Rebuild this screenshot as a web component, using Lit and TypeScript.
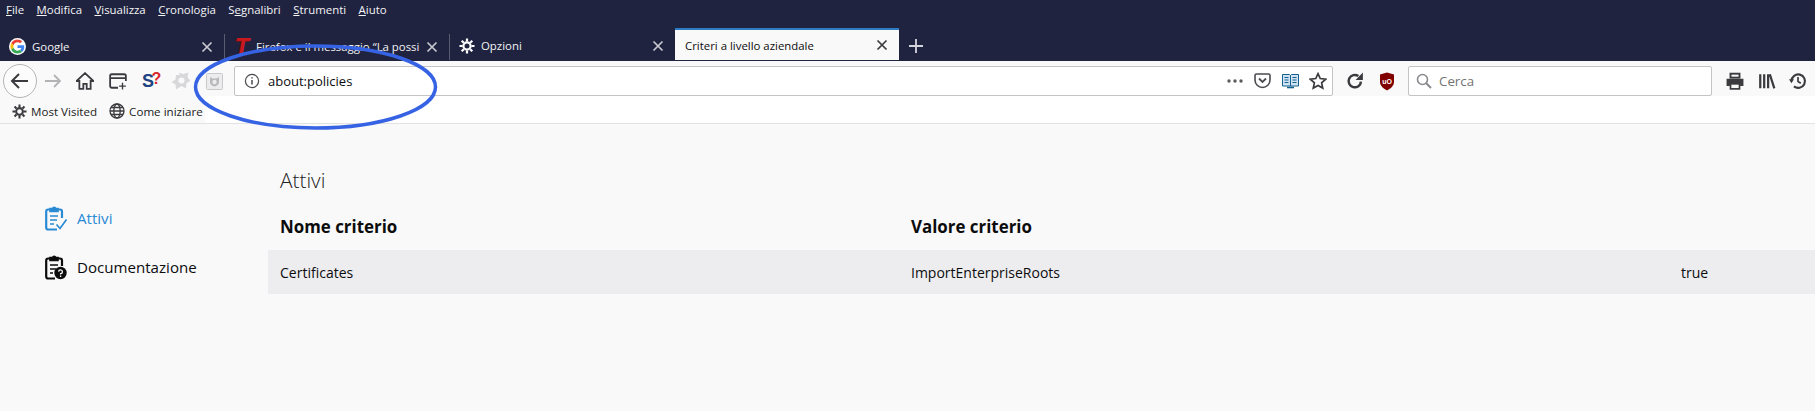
import { LitElement, html, css, svg } from "lit";
import { customElement } from "lit/decorators.js";

const gear = (c: string, s = 16) => html`<svg width=${s} height=${s} viewBox="0 0 16 16" fill="none" stroke=${c}>
  <circle cx="8" cy="8" r="3.6" stroke-width="2.2"/>
  <g stroke-width="2.2" stroke-linecap="butt">
    <path d="M8 0.5V3.5M8 12.5V15.5M0.5 8H3.5M12.5 8H15.5M2.7 2.7L4.8 4.8M11.2 11.2L13.3 13.3M13.3 2.7L11.2 4.8M4.8 11.2L2.7 13.3"/>
  </g></svg>`;
const close = (c: string) => html`<svg class="x" width="12" height="12" viewBox="0 0 12 12" stroke=${c} stroke-width="1.7" fill="none"><path d="M1.5 1.5L10.5 10.5M10.5 1.5L1.5 10.5"/></svg>`;
const google = html`<svg width="17" height="17" viewBox="-5 -5 58 58"><circle cx="24" cy="24" r="29" fill="#fff"/>
  <path fill="#EA4335" d="M24 9.5c3.54 0 6.71 1.22 9.21 3.6l6.85-6.85C35.9 2.38 30.47 0 24 0 14.62 0 6.51 5.38 2.56 13.22l7.98 6.19C12.43 13.72 17.74 9.5 24 9.5z"/>
  <path fill="#4285F4" d="M46.98 24.55c0-1.57-.15-3.09-.38-4.55H24v9.02h12.94c-.58 2.96-2.26 5.48-4.78 7.18l7.73 6c4.51-4.18 7.09-10.36 7.09-17.65z"/>
  <path fill="#FBBC05" d="M10.53 28.59c-.48-1.45-.76-2.99-.76-4.59s.27-3.14.76-4.59l-7.98-6.19C.92 16.46 0 20.12 0 24c0 3.88.92 7.54 2.56 10.78l7.97-6.19z"/>
  <path fill="#34A853" d="M24 48c6.48 0 11.93-2.13 15.89-5.81l-7.73-6c-2.15 1.45-4.92 2.3-8.16 2.3-6.26 0-11.57-4.22-13.47-9.91l-7.98 6.19C6.51 42.62 14.62 48 24 48z"/></svg>`;

const ic = (w: number, body: unknown) => html`<span class="slot" style="width:${w}px">${body}</span>`;
const s16 = (body: unknown, fill = "none", stroke = "#3b3b3f", w = 1.6) => html`<svg width="18" height="18" viewBox="0 0 16 16" fill=${fill} stroke=${stroke} stroke-width=${w}>${body}</svg>`;

const checklist = (c: string) => html`<svg width="22" height="26" viewBox="0 0 22 26" fill="none" stroke=${c} stroke-width="2.2">
  <path d="M5 4.5H3.2A2 2 0 0 0 1.2 6.5V22.5A2 2 0 0 0 3.2 24.5H12M13 4.5H15A2 2 0 0 1 17 6.5V13"/>
  <path d="M5 6.5V3.5H7.5A1.8 1.8 0 0 1 10.8 3.5H13V6.5Z" stroke-width="1.6" fill=${c}/>
  <path d="M5 11H13M5 15H12M5 19H9" stroke-width="1.7"/>
  <path d="M11.5 19.5L15 23.5L21.5 14.5" stroke-width="1.7"/></svg>`;

const docIcon = html`<svg width="22" height="26" viewBox="0 0 22 26" fill="none" stroke="#0c0c0d" stroke-width="2.2">
  <path d="M5 4.5H3.2A2 2 0 0 0 1.2 6.5V22.5A2 2 0 0 0 3.2 24.5H10M13 4.5H15A2 2 0 0 1 17 6.5V12"/>
  <path d="M5 6.5V3.5H7.5A1.8 1.8 0 0 1 10.8 3.5H13V6.5Z" stroke-width="1.6" fill="#0c0c0d"/>
  <path d="M5 11H13M5 15H11M5 19H8" stroke-width="1.7"/>
  <circle cx="15.5" cy="19" r="6.2" fill="#0c0c0d" stroke="none"/>
  <path d="M13.6 17.6A1.9 1.9 0 1 1 15.6 19.6V20.6M15.6 21.6V23" stroke="#fff" stroke-width="1.3"/></svg>`;

@customElement("app-root")
export class AppRoot extends LitElement {
  static styles = css`
    :host { display: block; position: relative; width: 1815px; height: 411px; overflow: hidden; background: #f9f9fa; font-family: "Open Sans", "Noto Sans", sans-serif; color: #0c0c0d; }
    .menubar { height: 30px; box-sizing: border-box; background: #202340; color: #f4f4f6; display: flex; align-items: center; gap: 12.5px; padding: 0 0 11px 6px; font-size: 11.4px; }
    .tabs { height: 31px; background: #202340; display: flex; color: #f2f2f4; font-size: 11.4px; }
    .tab { width: 225px; box-sizing: border-box; display: flex; align-items: center; padding: 0 11px 0 9px; gap: 6px; position: relative; }
    .tab .lbl { flex: 1; white-space: nowrap; overflow: hidden; }
    .tab.sep { border-right: 1px solid #5a5c72; margin: 2px 0 0; height: 26px; align-self: center; }
    .tab.active { width: 224px; height: 32px; margin-top: -2px; background: #f9f9fa; color: #0c0c0d; border-top: 2px solid #2d7cc1; padding-left: 10px; }
    .plus { margin-left: 9px; display: flex; align-items: center; }
    .toolbar { height: 35px; box-sizing: border-box; display: flex; align-items: center; padding-top: 5px; }
    .slot { display: flex; flex: none; align-items: center; justify-content: center; height: 30px; }
    .back { width: 34px; height: 34px; box-sizing: border-box; margin-left: 3px; border: 1px solid #b5b5b8; border-radius: 50%; background: #fcfcfc; display: flex; align-items: center; justify-content: center; flex: none; }
    .urlbar { width: 1099px; height: 30px; box-sizing: border-box; background: #fff; border: 1px solid #c4c4c6; border-radius: 2px; display: flex; align-items: center; font-size: 13px; flex: none; }
    .urlbar .txt { flex: 1; }
    .search { width: 304px; height: 30px; box-sizing: border-box; margin-left: 11px; background: #fff; border: 1px solid #c4c4c6; border-radius: 2px; display: flex; align-items: center; padding-left: 7px; gap: 7px; font-size: 13.3px; color: #737373; flex: none; }
    .bookmarks { height: 28px; box-sizing: border-box; background: linear-gradient(to right, #f9f9fa 205px, #fff 205px); border-bottom: 1px solid #e2e2e3; display: flex; align-items: center; padding: 3px 0 0 12px; gap: 12px; font-size: 11.6px; color: #222; }
    .bm { display: flex; align-items: center; gap: 4px; }
    .page { display: flex; }
    .side { width: 268px; flex: none; padding: 81px 0 0 45px; box-sizing: border-box; font-size: 15.1px; }
    .side .item { display: flex; align-items: center; gap: 10px; height: 26px; margin-bottom: 23px; }
    .side .item.on { color: #2a8ad4; }
    .main { flex: 1; padding-top: 42px; }
    h2 { margin: 0 0 1px 12px; font-weight: 300; font-size: 20.8px; line-height: 28px; color: #222; }
    .grid { display: grid; grid-template-columns: 643px 770px 1fr; }
    .head { font-weight: 700; font-size: 16.9px; line-height: 24px; padding: 20px 0 11px 12px; }
    .head + .head { padding-left: 0; }
    .cell { background: #ededf0; height: 44px; display: flex; align-items: center; font-size: 14px; padding-left: 12px; }
    .cell + .cell { padding-left: 0; }
    .ring { position: absolute; left: 190px; top: 42px; pointer-events: none; }
    .s-mark { font: 700 18px "Liberation Sans", sans-serif; color: #1d4380; position: relative; letter-spacing: -2.5px; }
    .s-mark b { color: #d9262c; font-size: 16px; position: relative; top: -3px; }
    .tee { font: 700 italic 23px "Liberation Sans", sans-serif; color: #c9191e; width: 16px; text-align: center; line-height: 20px; flex: none; text-shadow: -1px 1px 0 #7c1015; }
    .shield-t { font: 700 7px "Liberation Sans", sans-serif; fill: #fff; }
    .x { flex: none; }
  `;

  render() {
    const menus: [string, string, string][] = [
      ["", "F", "ile"], ["", "M", "odifica"], ["", "V", "isualizza"], ["", "C", "ronologia"],
      ["S", "e", "gnalibri"], ["", "S", "trumenti"], ["", "A", "iuto"],
    ];
    return html`
      <div class="menubar">${menus.map(([a, u, b]) => html`<span>${a}<u>${u}</u>${b}</span>`)}</div>
      <div class="tabs">
        <div class="tab sep">${google}<span class="lbl">Google</span>${close("#c8c9d0")}</div>
        <div class="tab sep"><span class="tee">T</span><span class="lbl">Firefox e il messaggio “La possi</span>${close("#c8c9d0")}</div>
        <div class="tab">${gear("#fff")}<span class="lbl">Opzioni</span>${close("#c8c9d0")}</div>
        <div class="tab active"><span class="lbl">Criteri a livello aziendale</span>${close("#3b3b3f")}</div>
        <div class="plus"><svg width="16" height="16" viewBox="0 0 16 16" stroke="#d4d5dc" stroke-width="1.8"><path d="M8 1V15M1 8H15"/></svg></div>
      </div>
      <div class="toolbar">
        <div class="back"><svg width="20" height="18" viewBox="0 0 20 18" fill="none" stroke="#3b3b3f" stroke-width="2"><path d="M18 9H2M9 2L2 9L9 16"/></svg></div>
        ${ic(31, html`<svg width="18" height="16" viewBox="0 0 18 16" fill="none" stroke="#b3b3b6" stroke-width="1.8"><path d="M1 8H16M10 2L16 8L10 14"/></svg>`)}
        ${ic(34, s16(svg`<path d="M8 1L0.5 8H3V15H6.5V10.5H9.5V15H13V8H15.5Z" stroke-width="1.6"/>`))}
        ${ic(31, s16(svg`<path d="M8 14H2.5A1.5 1.5 0 0 1 1 12.5V3.5A1.5 1.5 0 0 1 2.5 2H13.5A1.5 1.5 0 0 1 15 3.5V8M1 5.5H15" /><path d="M12 9.5V15.5M9 12.5H15" stroke-width="1.2"/>`))}
        ${ic(35, html`<span class="s-mark">S<b>?</b></span>`)}
        ${ic(26, html`<svg width="20" height="18" viewBox="0 0 20 18" fill="#d8d8da"><path d="M9 3L7.5 0.5L12 2L17.5 0.5L16.5 5L19.5 9L15.5 11L15 16.5L10.5 14L5 17.5L4.5 12.5L0.5 10L4.5 7.5L5 3Z"/><circle cx="10.5" cy="8.5" r="3" fill="#f9f9fa"/></svg>`)}
        ${ic(40, html`<svg width="17" height="17" viewBox="0 0 17 17"><rect x="0.5" y="0.5" width="16" height="16" rx="1" fill="#ececee" stroke="#c9c9cc"/><path d="M4 4L6.5 5.5H10.5L13 4V9.5C13 11.5 10.5 13 8.5 13.5C6.5 13 4 11.5 4 9.5Z" fill="#b9b9bc"/><circle cx="8.5" cy="9" r="2.2" fill="#ececee"/></svg>`)}
        <div class="urlbar">
          ${ic(33, html`<svg width="16" height="16" viewBox="0 0 16 16" fill="none" stroke="#4a4a4f" stroke-width="1.2"><circle cx="8" cy="8" r="6.6"/><path d="M8 7V11.5M8 4.2V5.6" stroke-width="1.5"/></svg>`)}
          <span class="txt">about:policies</span>
          ${ic(26, html`<svg width="16" height="4" viewBox="0 0 16 4" fill="#5a5a5f"><circle cx="2" cy="2" r="1.7"/><circle cx="8" cy="2" r="1.7"/><circle cx="14" cy="2" r="1.7"/></svg>`)}
          ${ic(28, html`<svg width="17" height="16" viewBox="0 0 17 16" fill="none" stroke="#4a4a4f" stroke-width="1.6"><path d="M2.5 1H14.5A1.5 1.5 0 0 1 16 2.5V7A7.5 7.5 0 0 1 1 7V2.5A1.5 1.5 0 0 1 2.5 1Z"/><path d="M5 5.5L8.5 9L12 5.5" stroke-width="1.8"/></svg>`)}
          ${ic(28, html`<svg width="17" height="16" viewBox="0 0 17 16"><path d="M0.5 1.5H7.5L8.5 2.5L9.5 1.5H16.5V13H0.5Z" fill="#cfe3f3" stroke="#14608f"/><path d="M8.5 2.5V13M2.5 4.5H6.5M2.5 7H6.5M2.5 9.5H6.5M10.5 4.5H14.5M10.5 7H14.5M10.5 9.5H14.5" stroke="#14608f"/><path d="M5 14.5H12" stroke="#14608f" stroke-width="1.6"/></svg>`)}
          ${ic(28, s16(svg`<path d="M8 1.5L10 5.8L14.8 6.4L11.2 9.6L12.2 14.3L8 12L3.8 14.3L4.8 9.6L1.2 6.4L6 5.8Z" stroke-width="1.5"/>`))}
        </div>
        ${ic(44, s16(svg`<path d="M13.3 8.5A5.5 5.5 0 1 1 11 3.6" stroke-width="2.2"/><path d="M15 0.5V7H8.5Z" fill="#3b3b3f" stroke="none"/>`))}
        ${ic(20, html`<svg width="16" height="19" viewBox="0 0 16 19"><path d="M8 0.5L15 2.5V10C15 14 11 17 8 18.5C5 17 1 14 1 10V2.5Z" fill="#800000"/><text x="8" y="11.5" text-anchor="middle" class="shield-t">uO</text></svg>`)}
        <div class="search">
          <svg width="16" height="16" viewBox="0 0 16 16" fill="none" stroke="#8a8a8e" stroke-width="1.6"><circle cx="6.5" cy="6.5" r="5"/><path d="M10.2 10.2L15 15" stroke-width="2"/></svg>
          <span>Cerca</span>
        </div>
        ${ic(45, s16(svg`<path d="M0.5 6H15.5V12.5H12.5V10H3.5V12.5H0.5Z" fill="#3b3b3f" stroke="none"/><rect x="4" y="1.5" width="8" height="3.5" stroke-width="1.7"/><rect x="4" y="10.5" width="8" height="4.5" stroke-width="1.5"/>`))}
        ${ic(20, s16(svg`<path d="M2 2V14.5M5.5 2V14.5M9 2V14.5M10.5 2L14.5 14.5" stroke-width="2"/>`))}
        ${ic(42, s16(svg`<path d="M2.2 8A6 6 0 1 1 4.4 12.8" stroke-width="1.9"/><path d="M0 6.5H4.4L2.2 10Z" fill="#3b3b3f" stroke="none"/><path d="M8 4.5V8.5L10.5 10" stroke-width="1.5"/>`))}
      </div>
      <div class="bookmarks">
        <span class="bm">${gear("#3b3b3f", 15)}<span>Most Visited</span></span>
        <span class="bm"><svg width="16" height="16" viewBox="0 0 16 16" fill="none" stroke="#3b3b3f" stroke-width="1.3"><circle cx="8" cy="8" r="7"/><ellipse cx="8" cy="8" rx="3.2" ry="7"/><path d="M1 8H15M2 4.5H14M2 11.5H14"/></svg><span>Come iniziare</span></span>
      </div>
      <div class="page">
        <nav class="side">
          <div class="item on">${checklist("#2a8ad4")}<span>Attivi</span></div>
          <div class="item">${docIcon}<span>Documentazione</span></div>
        </nav>
        <div class="main">
          <h2>Attivi</h2>
          <div class="grid">
            <div class="head">Nome criterio</div><div class="head">Valore criterio</div><div class="head"></div>
            <div class="cell">Certificates</div><div class="cell">ImportEnterpriseRoots</div><div class="cell">true</div>
          </div>
        </div>
      </div>
      <svg class="ring" width="252" height="92" viewBox="0 0 252 92" fill="none"><ellipse cx="125.5" cy="45" rx="120" ry="41" stroke="#3663e3" stroke-width="3.5"/></svg>
    `;
  }
}
